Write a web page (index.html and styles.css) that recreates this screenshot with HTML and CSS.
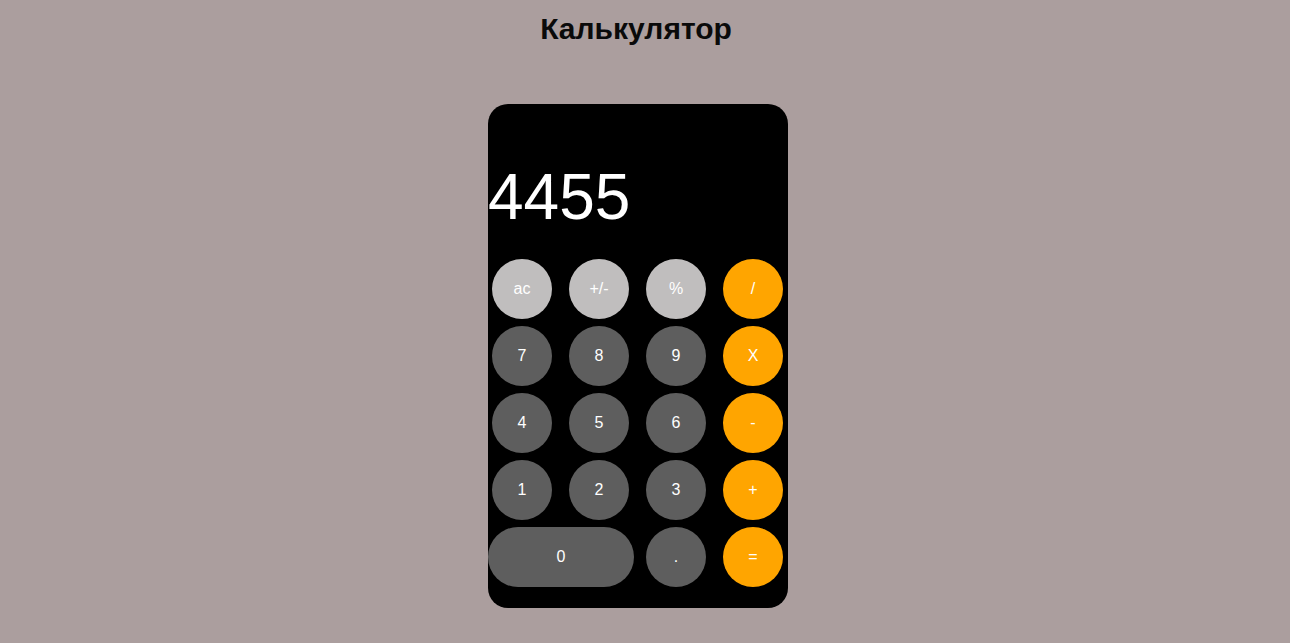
FILE: index.html
```html
<!DOCTYPE html>
<html lang="ru">
<head>
<meta charset="utf-8">
<title>Калькулятор</title>
<link rel="stylesheet" href="styles.css">
</head>
<body>
<div class="page">
  <h1 class="title">Калькулятор</h1>
  <div class="calc">
    <div class="display">4455</div>
    <div class="keys">
      <button class="key light">ac</button>
      <button class="key light">+/-</button>
      <button class="key light">%</button>
      <button class="key op">/</button>
      <button class="key">7</button>
      <button class="key">8</button>
      <button class="key">9</button>
      <button class="key op">X</button>
      <button class="key">4</button>
      <button class="key">5</button>
      <button class="key">6</button>
      <button class="key op">-</button>
      <button class="key">1</button>
      <button class="key">2</button>
      <button class="key">3</button>
      <button class="key op">+</button>
      <button class="key zero">0</button>
      <button class="key">.</button>
      <button class="key op">=</button>
    </div>
  </div>
</div>
</body>
</html>
```
FILE: styles.css
```css
html, body {
  margin: 0;
  padding: 0;
  background: #ab9e9e;
  font-family: "Liberation Sans", Arial, sans-serif;
}
.page {
  display: flex;
  flex-direction: column;
  align-items: center;
  padding-right: 14px;
}
.title {
  margin: 11px 0 0;
  padding-right: 4px;
  font-size: 30px;
  line-height: 36px;
  font-weight: bold;
  color: #0a0a0a;
}
.calc {
  margin-top: 57px;
  width: 300px;
  box-sizing: border-box;
  background: #000;
  border-radius: 20px;
  padding: 61px 0 21px;
}
.display {
  color: #fff;
  font-size: 64px;
  line-height: 64px;
  height: 64px;
  margin-bottom: 30px;
  white-space: nowrap;
}
.keys {
  display: grid;
  grid-template-columns: repeat(4, 60px);
  grid-auto-rows: 60px;
  column-gap: 17px;
  row-gap: 7px;
  padding-left: 4px;
}
.key {
  width: 60px;
  height: 60px;
  border: none;
  border-radius: 30px;
  background: #5e5e5e;
  color: #fff;
  font-family: "Liberation Sans", Arial, sans-serif;
  font-size: 16px;
  padding: 0;
}
.key.light {
  background: #c0bebe;
}
.key.op {
  background: #ffa500;
}
.key.zero {
  grid-column: span 2;
  width: 146px;
  margin-left: -4px;
}
```
